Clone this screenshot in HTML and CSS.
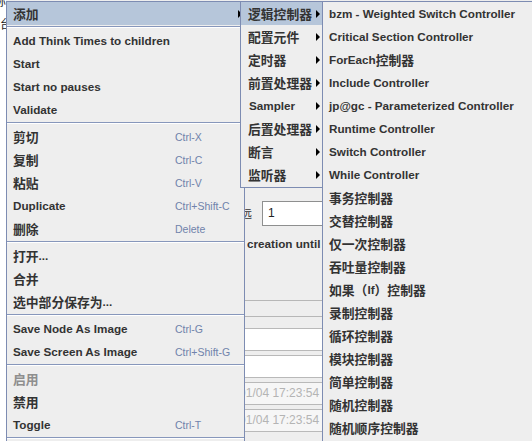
FILE: index.html
```html
<!DOCTYPE html>
<html>
<head>
<meta charset="utf-8">
<link rel="stylesheet" href="styles.css">
</head>
<body>
<div class="app">
  <div class="strip">
    <div class="strip-a">称</div>
    <div class="strip-b">台</div>
  </div>
  <div class="form">
    <div class="loop-row">
      <div class="loop-label"><span class="loop-text">永远</span></div>
      <div class="input">1</div>
    </div>
    <div class="delay-row">
      <div class="delay-pre"></div>
      <div class="delay-text">creation until needed</div>
    </div>
    <div class="group">
      <div class="group-inner">
        <div class="field white"></div>
        <div class="field white"></div>
        <div class="field date">2019/01/04 17:23:54</div>
        <div class="field date">2019/01/04 17:23:54</div>
      </div>
    </div>
  </div>
</div>

<div class="menu m1">
  <div class="item zh hi">添加<span class="arrow"></span></div>
  <div class="sep"></div>
  <div class="item">Add Think Times to children</div>
  <div class="item">Start</div>
  <div class="item">Start no pauses</div>
  <div class="item">Validate</div>
  <div class="sep"></div>
  <div class="item"><span class="label zh">剪切</span><span class="key">Ctrl-X</span></div>
  <div class="item"><span class="label zh">复制</span><span class="key">Ctrl-C</span></div>
  <div class="item"><span class="label zh">粘贴</span><span class="key">Ctrl-V</span></div>
  <div class="item"><span class="label">Duplicate</span><span class="key">Ctrl+Shift-C</span></div>
  <div class="item"><span class="label zh">删除</span><span class="key">Delete</span></div>
  <div class="sep"></div>
  <div class="item"><span class="zh">打开</span>...</div>
  <div class="item zh">合并</div>
  <div class="item"><span class="zh">选中部分保存为</span>...</div>
  <div class="sep"></div>
  <div class="item"><span class="label">Save Node As Image</span><span class="key">Ctrl-G</span></div>
  <div class="item"><span class="label">Save Screen As Image</span><span class="key">Ctrl+Shift-G</span></div>
  <div class="sep"></div>
  <div class="item zh off">启用</div>
  <div class="item zh">禁用</div>
  <div class="item"><span class="label">Toggle</span><span class="key">Ctrl-T</span></div>
  <div class="sep"></div>
</div>

<div class="menu m2">
  <div class="item zh hi">逻辑控制器<span class="arrow"></span></div>
  <div class="item zh">配置元件<span class="arrow"></span></div>
  <div class="item zh">定时器<span class="arrow"></span></div>
  <div class="item zh">前置处理器<span class="arrow"></span></div>
  <div class="item lat">Sampler<span class="arrow"></span></div>
  <div class="item zh">后置处理器<span class="arrow"></span></div>
  <div class="item zh">断言<span class="arrow"></span></div>
  <div class="item zh">监听器<span class="arrow"></span></div>
</div>

<div class="menu m3">
  <div class="item">bzm - Weighted Switch Controller</div>
  <div class="item">Critical Section Controller</div>
  <div class="item">ForEach<span class="zh">控制器</span></div>
  <div class="item">Include Controller</div>
  <div class="item">jp@gc - Parameterized Controller</div>
  <div class="item">Runtime Controller</div>
  <div class="item">Switch Controller</div>
  <div class="item">While Controller</div>
  <div class="item zh">事务控制器</div>
  <div class="item zh">交替控制器</div>
  <div class="item zh">仅一次控制器</div>
  <div class="item zh">吞吐量控制器</div>
  <div class="item"><span class="zh">如果（</span>If<span class="zh">）控制器</span></div>
  <div class="item zh">录制控制器</div>
  <div class="item zh">循环控制器</div>
  <div class="item zh">模块控制器</div>
  <div class="item zh">简单控制器</div>
  <div class="item zh">随机控制器</div>
  <div class="item zh">随机顺序控制器</div>
</div>
</body>
</html>
```

FILE: styles.css
```css
* { box-sizing: border-box; }
html, body { margin: 0; padding: 0; }
body {
  width: 532px;
  height: 441px;
  overflow: hidden;
  position: relative;
  background: #eeeeee;
  color: #333333;
  font-family: "Liberation Sans", "Noto Sans CJK SC", sans-serif;
  font-size: 11.7px;
  font-weight: bold;
}

/* background application */
.app { display: flex; height: 441px; }
.strip {
  width: 6px;
  background: #ffffff;
  overflow: hidden;
  font-family: "Noto Sans CJK SC", sans-serif;
  font-size: 12px;
  font-weight: normal;
  color: #222;
}
.strip-a { margin-top: -7px; margin-left: -6px; line-height: 16px; }
.strip-b { margin-top: 7px; line-height: 16px; }

.form { flex: 1; background: #eeeeee; padding-top: 201px; overflow: hidden; }
.loop-row { display: flex; height: 25px; align-items: stretch; }
.loop-label {
  width: 246px;
  display: flex;
  justify-content: flex-end;
  line-height: 25px;
  font-family: "Noto Sans CJK SC", sans-serif;
  font-size: 11px;
  font-weight: normal;
  white-space: nowrap;
}
.loop-text { display: block; }
.input {
  margin-left: 10px;
  width: 90px;
  background: #ffffff;
  border: 1px solid #8e8f8f;
  border-right: none;
  padding-left: 5px;
  line-height: 23px;
  font-weight: normal;
  font-size: 12px;
  color: #222;
}
.delay-row { display: flex; height: 18px; margin-top: 9px; line-height: 18px; white-space: nowrap; }
.delay-pre { width: 241px; }
.delay-text { width: 75px; overflow: hidden; color: #333; }

.group {
  margin-top: 47px;
  border-top: 1px solid #b7b7b7;
  padding-top: 15px;
}
.group-inner {
  border-top: 1px solid #b7b7b7;
  padding-top: 11px;
  margin-left: 200px;
  width: 160px;
}
.field {
  height: 23px;
  border-top: 1px solid #b9b9b9;
  border-bottom: 1px solid #b9b9b9;
  margin-bottom: 4px;
}
.field.white { background: #ffffff; }
.field.date {
  background: #f6f6f6;
  color: #b4b4b4;
  font-weight: normal;
  font-size: 12px;
  line-height: 21px;
  padding-left: 3px;
  white-space: nowrap;
  overflow: hidden;
}

/* popup menus */
.menu {
  position: absolute;
  background: #eeeeee;
  border: 1px solid #7d8cb2;
  white-space: nowrap;
}
.m1 { left: 6px; top: 1px; width: 239px; height: 460px; }
.m2 { left: 240px; top: 1px; width: 83px; height: 187px; }
.m3 { left: 322px; top: 1px; width: 220px; height: 460px; }

.item {
  height: 23px;
  display: flex;
  align-items: center;
  padding-left: 6px;
}
.m2 .item { padding-left: 7px; }
.m2 .item.lat { padding-left: 8px; }
.item.hi { background: #b6c6da; }
.item.off { color: #8e8e8e; }

.zh {
  font-family: "Noto Sans CJK SC", sans-serif;
  font-size: 12.8px;
  font-weight: bold;
}
.label { width: 162px; flex: none; }
.key {
  font-family: "Liberation Sans", sans-serif;
  font-size: 10.5px;
  font-weight: normal;
  color: #7083ab;
}

.arrow {
  margin-left: auto;
  margin-right: 2px;
  width: 0;
  height: 0;
  border-top: 4px solid transparent;
  border-bottom: 4px solid transparent;
  border-left: 4px solid #000;
}

.sep { height: 4px; padding-top: 1px; }
.sep::before {
  content: "";
  display: block;
  height: 1px;
  background: #8797bb;
  border-bottom: 1px solid #ffffff;
  box-sizing: content-box;
}
```
